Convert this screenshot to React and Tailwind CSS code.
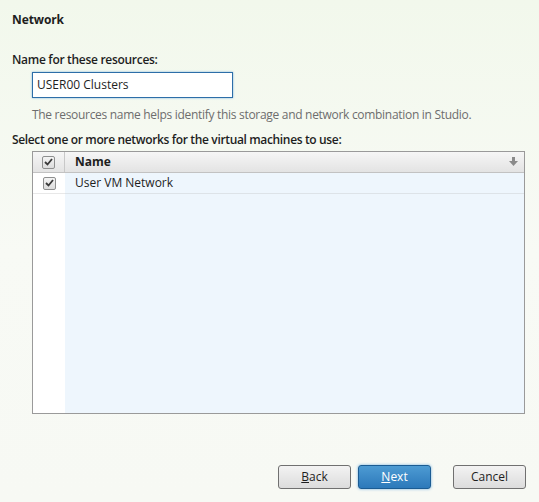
import React from "react";

function Check() {
  return (
    <div className="w-[13px] h-[13px] border border-[#8e8f8f] rounded-[2px] bg-gradient-to-b from-[#f4f4f4] to-[#dcdcdc] flex items-center justify-center">
      <svg width="9" height="8" viewBox="0 0 9 8">
        <path d="M1 4 L3.5 6.5 L8 1" fill="none" stroke="#3a3a3a" strokeWidth="1.8" />
      </svg>
    </div>
  );
}

export default function App() {
  return (
    <div
      className="w-[539px] h-[502px] flex flex-col text-[12px] text-[#1e1e1e] bg-gradient-to-b from-[#f2f8ec] via-[#f8faf5] to-[#f7f9f4]"
      style={{ fontFamily: '"Open Sans", "Noto Sans", sans-serif' }}
    >
      <div className="pl-[12px] pt-[11px] h-[51px] font-bold text-[12px] leading-[18px] tracking-[-0.1px]">Network</div>
      <div className="pl-[12px] font-semibold leading-[18px] tracking-[-0.3px]">Name for these resources:</div>
      <div className="pl-[32px] mt-[3px]">
        <div className="w-[201px] h-[26px] border border-[#2d6ea8] shadow-[0_0_2px_#7fb3e0] bg-white flex items-center pl-[4px] text-[12px]">
          USER00 Clusters
        </div>
      </div>
      <div className="pl-[32px] mt-[8px] text-[#6d6d6d] leading-[18px] tracking-[-0.3px]">
        The resources name helps identify this storage and network combination in Studio.
      </div>
      <div className="pl-[12px] mt-[7px] font-semibold leading-[18px] tracking-[-0.35px]">
        Select one or more networks for the virtual machines to use:
      </div>
      <div className="ml-[32px] mt-[2px] w-[493px] h-[263px] border border-[#9a9a9a] flex flex-col bg-[#eef6fd]">
        <div className="h-[21px] flex border-b border-[#c2c2c2] bg-gradient-to-b from-[#f6f6f6] to-[#e3e3e3]">
          <div className="w-[32px] border-r border-[#c8c8c8] flex items-center justify-center">
            <Check />
          </div>
          <div className="flex-1 flex items-center pl-[10px] font-bold">Name</div>
          <div className="w-[22px] flex items-center justify-center">
            <svg width="9" height="10" viewBox="0 0 9 10">
              <rect x="3" y="0" width="3" height="5" fill="#8a8a8a" />
              <path d="M0 4 L9 4 L4.5 9 Z" fill="#8a8a8a" />
            </svg>
          </div>
        </div>
        <div className="flex-1 flex">
          <div className="w-[32px] bg-white flex flex-col">
            <div className="h-[21px] flex items-center justify-center border-b border-[#e8e8e8]">
              <Check />
            </div>
          </div>
          <div className="flex-1 flex flex-col">
            <div className="h-[21px] flex items-center pl-[10px] border-b border-[#dde3e8]">User VM Network</div>
          </div>
        </div>
      </div>
      <div className="flex pl-[278px] mt-[51px] gap-[7px]">
        <button className="w-[73px] h-[24px] border border-[#707070] rounded-[3px] bg-gradient-to-b from-[#f3f3f3] to-[#dcdcdc] text-[12px] text-[#1e1e1e]">
          <span className="underline">B</span>ack
        </button>
        <button className="w-[73px] h-[24px] border border-[#1b5c93] rounded-[3px] bg-gradient-to-b from-[#4d9bd3] to-[#2c79ba] text-[12px] text-white shadow-[0_0_3px_#6fb0e0]">
          <span className="underline">N</span>ext
        </button>
        <button className="ml-[15px] w-[73px] h-[24px] border border-[#707070] rounded-[3px] bg-gradient-to-b from-[#f3f3f3] to-[#dcdcdc] text-[12px] text-[#1e1e1e]">
          Cancel
        </button>
      </div>
    </div>
  );
}
